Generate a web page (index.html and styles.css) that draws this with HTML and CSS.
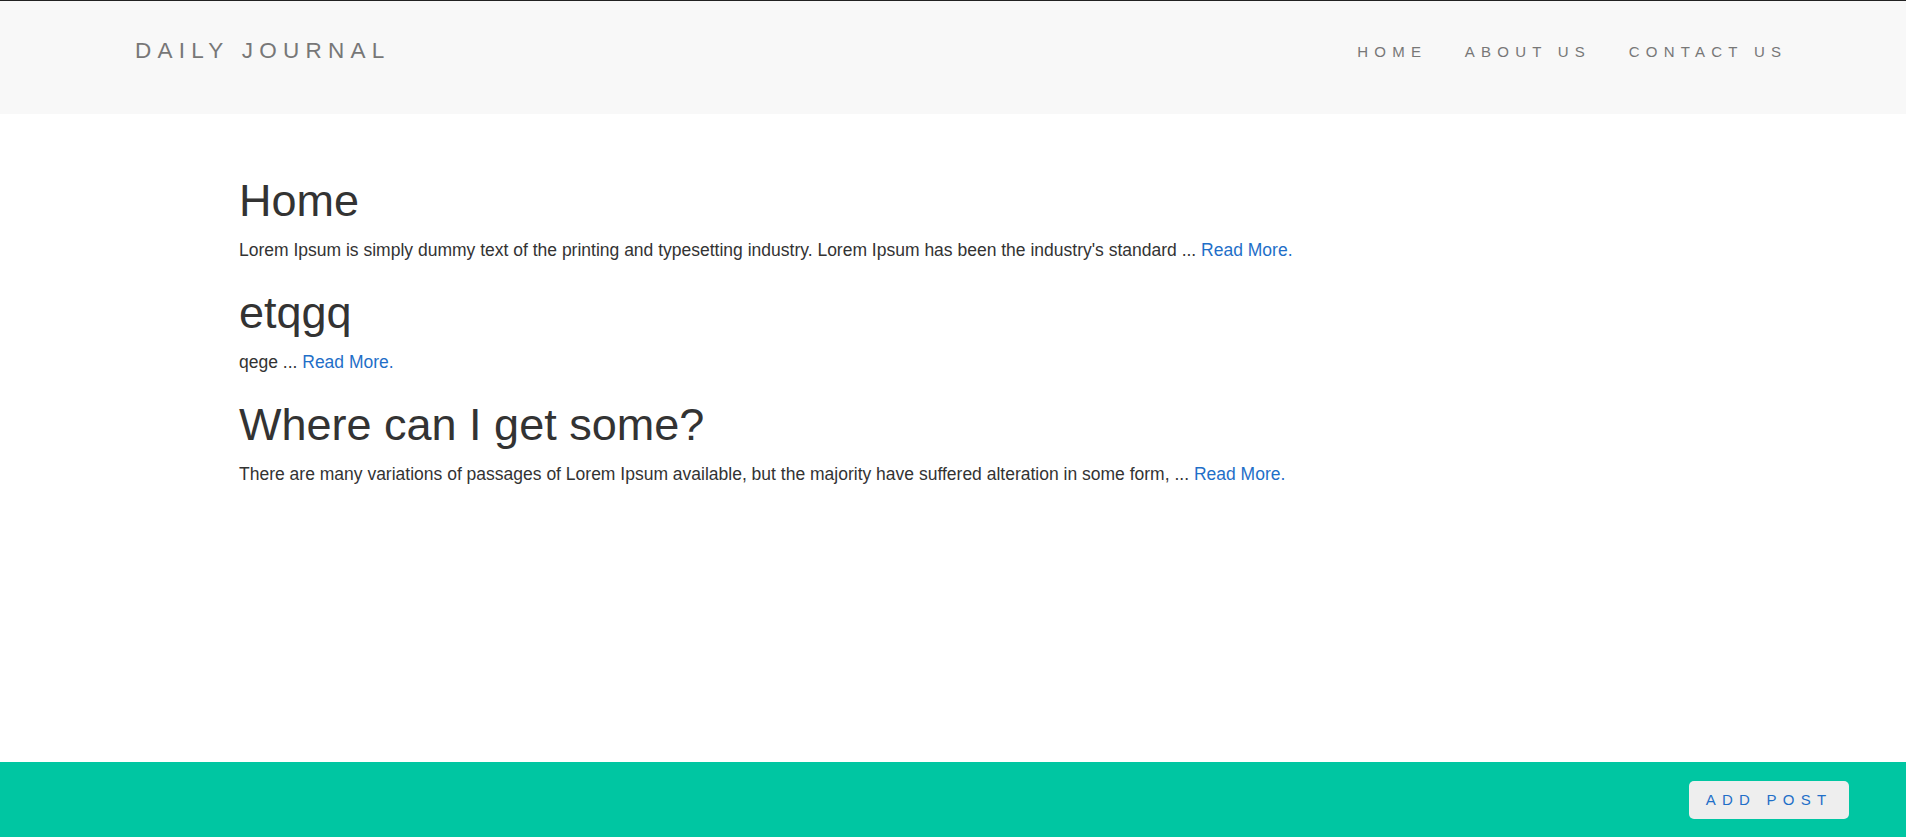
FILE: index.html
```html
<!DOCTYPE html>
<html lang="en">
<head>
<meta charset="utf-8">
<title>Daily Journal</title>
<link rel="stylesheet" href="styles.css">
</head>
<body>
  <nav class="navbar">
    <a class="brand" href="#">Daily Journal</a>
    <ul class="nav-links">
      <li><a href="#">Home</a></li>
      <li><a href="#">About Us</a></li>
      <li><a href="#">Contact Us</a></li>
    </ul>
  </nav>
  <main class="container">
    <article class="post">
      <h1>Home</h1>
      <p>Lorem Ipsum is simply dummy text of the printing and typesetting industry. Lorem Ipsum has been the industry's standard ... <a href="#">Read More.</a></p>
    </article>
    <article class="post">
      <h1>etqgq</h1>
      <p>qege ... <a href="#">Read More.</a></p>
    </article>
    <article class="post">
      <h1>Where can I get some?</h1>
      <p>There are many variations of passages of Lorem Ipsum available, but the majority have suffered alteration in some form, ... <a href="#">Read More.</a></p>
    </article>
  </main>
  <footer class="footer">
    <button class="add-btn" type="button">Add Post</button>
  </footer>
</body>
</html>
```

FILE: styles.css
```css
* {
  box-sizing: border-box;
}

html, body {
  margin: 0;
  padding: 0;
}

body {
  font-family: "Liberation Sans", Arial, Helvetica, sans-serif;
  font-size: 17.5px;
  line-height: 1.42857;
  color: #333;
  background: #fff;
  min-height: 100vh;
  display: flex;
  flex-direction: column;
  border-top: 1px solid #222;
}

a {
  color: #1f6fc8;
  text-decoration: none;
}

.navbar {
  height: 113px;
  background: #f8f8f8;
  display: flex;
  align-items: flex-start;
  justify-content: space-between;
  padding: 39px 100px 0 135px;
}

.brand {
  color: #777;
  font-size: 22.5px;
  letter-spacing: 6.25px;
  text-transform: uppercase;
  line-height: 1;
}

.nav-links {
  list-style: none;
  margin: 4px 0 0;
  padding: 0;
  display: flex;
}

.nav-links a {
  display: block;
  padding: 0 18.75px;
  color: #777;
  font-size: 15px;
  letter-spacing: 6.25px;
  text-transform: uppercase;
  line-height: 1;
}

.container {
  flex: 1;
  width: 100%;
  max-width: 1428px;
  margin: 0 auto;
  padding-top: 36.7px;
}

.post h1 {
  font-size: 45px;
  font-weight: 500;
  line-height: 1.1;
  margin: 25px 0 12.5px;
  color: #333;
}

.post p {
  margin: 0 0 12.5px;
}

.footer {
  height: 75px;
  background: #00c6a2;
  display: flex;
  align-items: center;
  justify-content: flex-end;
  padding-right: 57px;
}

.add-btn {
  height: 38px;
  padding: 0 16.6px;
  background: #eeeeee;
  border: none;
  border-radius: 5px;
  font-family: "Liberation Sans", Arial, Helvetica, sans-serif;
  font-size: 15px;
  letter-spacing: 6.25px;
  text-transform: uppercase;
  color: #1f6fc8;
  cursor: pointer;
}
```
